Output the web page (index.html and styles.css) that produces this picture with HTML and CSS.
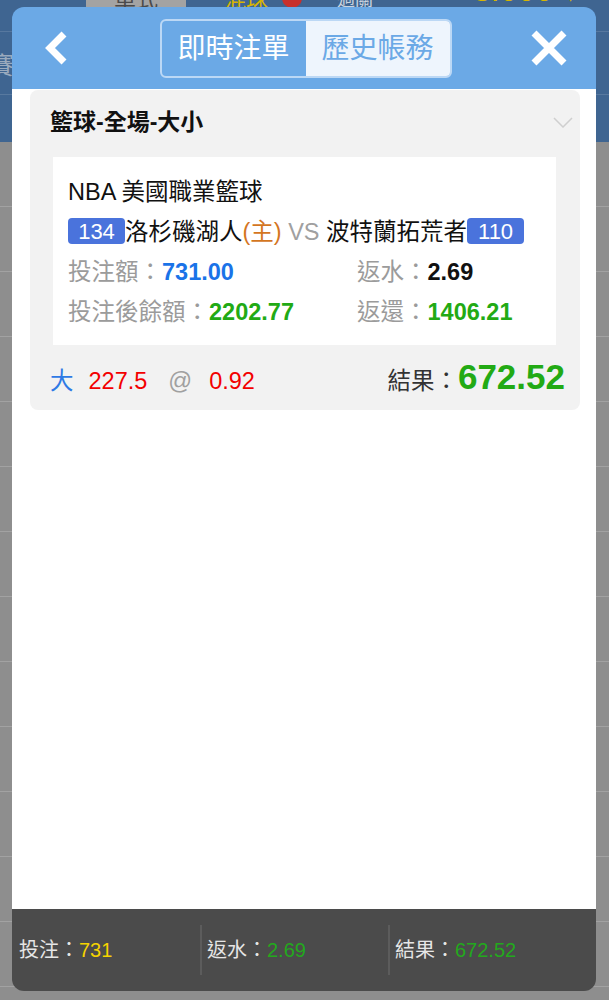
FILE: index.html
```html
<!DOCTYPE html>
<html lang="zh-Hant">
<head>
    <meta charset="UTF-8">
    <meta name="viewport" content="width=device-width, initial-scale=1.0">
    <title>歷史帳務</title>
    <link rel="stylesheet" href="styles.css">
</head>
<body>
    <!-- page behind the dialog -->
    <div class="page">
        <div class="topbar">
            <div class="tabs">
                <span class="tab tab-on">單式</span>
                <span class="tab tab-mix">混球</span>
                <span class="dot"></span>
                <span class="tab tab-pass">過關</span>
                <span class="money">3.000</span>
                <span class="caret">▾</span>
            </div>
            <div class="subbar"><span class="sub">賽</span></div>
        </div>
        <div class="rows">
            <div class="row"></div><div class="row"></div><div class="row"></div>
            <div class="row"></div><div class="row"></div><div class="row"></div>
            <div class="row"></div><div class="row"></div><div class="row"></div>
            <div class="row"></div><div class="row"></div><div class="row"></div>
            <div class="row"></div>
        </div>
    </div>

    <div class="modal">
        <div class="modal-head">
            <div class="icon-box">
                <svg width="26" height="36" viewBox="0 0 26 36">
                    <polyline points="21,4 7,18 21,32" fill="none" stroke="#fff" stroke-width="7"/>
                </svg>
            </div>
            <div class="switch">
                <span class="switch-item">即時注單</span>
                <span class="switch-item active">歷史帳務</span>
            </div>
            <div class="icon-box icon-right">
                <svg width="38" height="38" viewBox="0 0 38 38">
                    <path d="M4 4 L34 34 M34 4 L4 34" stroke="#fff" stroke-width="7"/>
                </svg>
            </div>
        </div>

        <div class="modal-body">
            <div class="bet">
                <div class="bet-title">
                    <span>籃球-全場-大小</span>
                    <svg width="20" height="11" viewBox="0 0 20 11">
                        <polyline points="1,1 10,10 19,1" fill="none" stroke="#cfcfcf" stroke-width="1.5"/>
                    </svg>
                </div>
                <div class="bet-box">
                    <div class="line">NBA 美國職業籃球</div>
                    <div class="line">
                        <span class="score">134</span>洛杉磯湖人<span class="home">(主)</span>
                        <span class="vs">VS</span> 波特蘭拓荒者<span class="score">110</span>
                    </div>
                    <div class="grid">
                        <div class="line"><span class="lbl">投注額：</span><b class="blue">731.00</b></div>
                        <div class="line"><span class="lbl">返水：</span><b>2.69</b></div>
                        <div class="line"><span class="lbl">投注後餘額：</span><b class="green">2202.77</b></div>
                        <div class="line"><span class="lbl">返還：</span><b class="green">1406.21</b></div>
                    </div>
                </div>
                <div class="bet-foot">
                    <div class="pick">
                        <span class="side">大</span>
                        <span class="red">227.5</span>
                        <span class="at">@</span>
                        <span class="red">0.92</span>
                    </div>
                    <div class="result">結果：<b>672.52</b></div>
                </div>
            </div>
        </div>

        <div class="modal-foot">
            <div class="sum">投注：<span class="yellow">731</span></div>
            <div class="sum">返水：<span class="green-l">2.69</span></div>
            <div class="sum">結果：<span class="green-l">672.52</span></div>
        </div>
    </div>
</body>
</html>
```
FILE: styles.css
```css
body {
    margin: 0;
    background: #8e8e8e;
    font-family: "Liberation Sans", "Noto Sans CJK TC", sans-serif;
}

/* background page */
.page {
    width: 609px;
    height: 1000px;
    overflow: hidden;
}
.topbar {
    height: 142px;
    background: #3f6591;
}
.tabs {
    height: 31px;
    border-bottom: 1px solid #57789f;
    display: flex;
    align-items: flex-start;
    font-size: 22px;
}
.tab {
    line-height: 20px;
    margin-top: -10px;
}
.tab-on {
    margin-left: 86px;
    width: 100px;
    height: 42px;
    background: #a3a3a3;
    color: #4a4a4a;
    text-align: center;
}
.tab-mix {
    color: #d9b600;
    margin-left: 38px;
}
.dot {
    width: 20px;
    height: 20px;
    border-radius: 50%;
    background: #c8302c;
    margin: -12px 0 0 14px;
}
.tab-pass {
    color: #c9d3df;
    font-size: 18px;
    margin-left: 35px;
}
.money {
    color: #d9b600;
    font-size: 32px;
    line-height: 24px;
    margin: -22px 0 0 100px;
}
.caret {
    color: #d9b600;
    font-size: 14px;
    line-height: 14px;
    margin: -10px 0 0 14px;
}
.subbar {
    height: 62px;
    border-bottom: 1px solid #58799f;
}
.sub {
    display: block;
    padding-top: 14px;
    margin-left: -10px;
    color: #9aaabd;
    font-size: 24px;
}
.row {
    height: 64px;
    border-bottom: 1px solid #a2a2a2;
}

/* dialog */
.modal {
    position: absolute;
    top: 7px;
    left: 12px;
    width: 584px;
    height: 984px;
    display: flex;
    flex-direction: column;
    border-radius: 12px;
    overflow: hidden;
}
.modal-head {
    height: 82px;
    flex: none;
    background: #6ba9e6;
    display: flex;
    align-items: center;
    justify-content: space-between;
    padding: 0 28px 0 31px;
}
.icon-box {
    width: 40px;
    display: flex;
}
.icon-right {
    justify-content: flex-end;
}
.switch {
    display: flex;
    border: 2px solid #bcd8f5;
    border-radius: 6px;
    overflow: hidden;
}
.switch-item {
    width: 144px;
    height: 55px;
    line-height: 55px;
    text-align: center;
    font-size: 28px;
    color: #fff;
}
.switch-item.active {
    background: #eef5fd;
    color: #6ba9e6;
}

.modal-body {
    flex: 1;
    background: #fff;
    padding-top: 1px;
}
.bet {
    width: 550px;
    margin-left: 18px;
    background: #f2f2f2;
    border-radius: 8px;
}
.bet-title {
    display: flex;
    align-items: center;
    justify-content: space-between;
    padding: 17px 7px 20px 20px;
    line-height: 30px;
    font-size: 23px;
    font-weight: bold;
    color: #111;
}
.bet-box {
    margin: 0 24px 0 23px;
    padding: 15px 15px 13px;
    background: #fff;
    font-size: 23.5px;
    color: #111;
}
.line {
    line-height: 40px;
    white-space: nowrap;
}
.score {
    display: inline-block;
    width: 57px;
    height: 26px;
    line-height: 27px;
    border-radius: 4px;
    background: #4a73dc;
    color: #fff;
    text-align: center;
    font-size: 22px;
    vertical-align: 1px;
}
.home {
    color: #d4761f;
}
.vs {
    color: #a0a0a0;
}
.grid {
    display: grid;
    grid-template-columns: 289px 1fr;
}
.lbl {
    color: #9b9b9b;
}
.blue {
    color: #1a73e8;
}
.green {
    color: #22aa14;
}
.bet-foot {
    height: 65px;
    box-sizing: border-box;
    display: flex;
    align-items: baseline;
    justify-content: space-between;
    padding: 12px 15px 0 20px;
    font-size: 23.5px;
}
.pick {
    display: flex;
    align-items: baseline;
    gap: 15px;
}
.side {
    color: #2f7ae5;
}
.red {
    color: #f30000;
}
.at {
    color: #a0a0a0;
    margin: 0 2px 0 6px;
}
.result {
    color: #333;
}
.result b {
    font-size: 35px;
    color: #22aa14;
}

.modal-foot {
    height: 82px;
    flex: none;
    background: #4b4b4b;
    display: flex;
    align-items: center;
}
.sum {
    width: 181px;
    padding-left: 7px;
    height: 50px;
    line-height: 50px;
    font-size: 20px;
    color: #e6e6e6;
}
.sum + .sum {
    border-left: 2px solid #5c5c5c;
    padding-left: 5px;
}
.sum:last-child {
    flex: 1;
}
.yellow {
    color: #f5d300;
}
.green-l {
    color: #23a81d;
}
```
